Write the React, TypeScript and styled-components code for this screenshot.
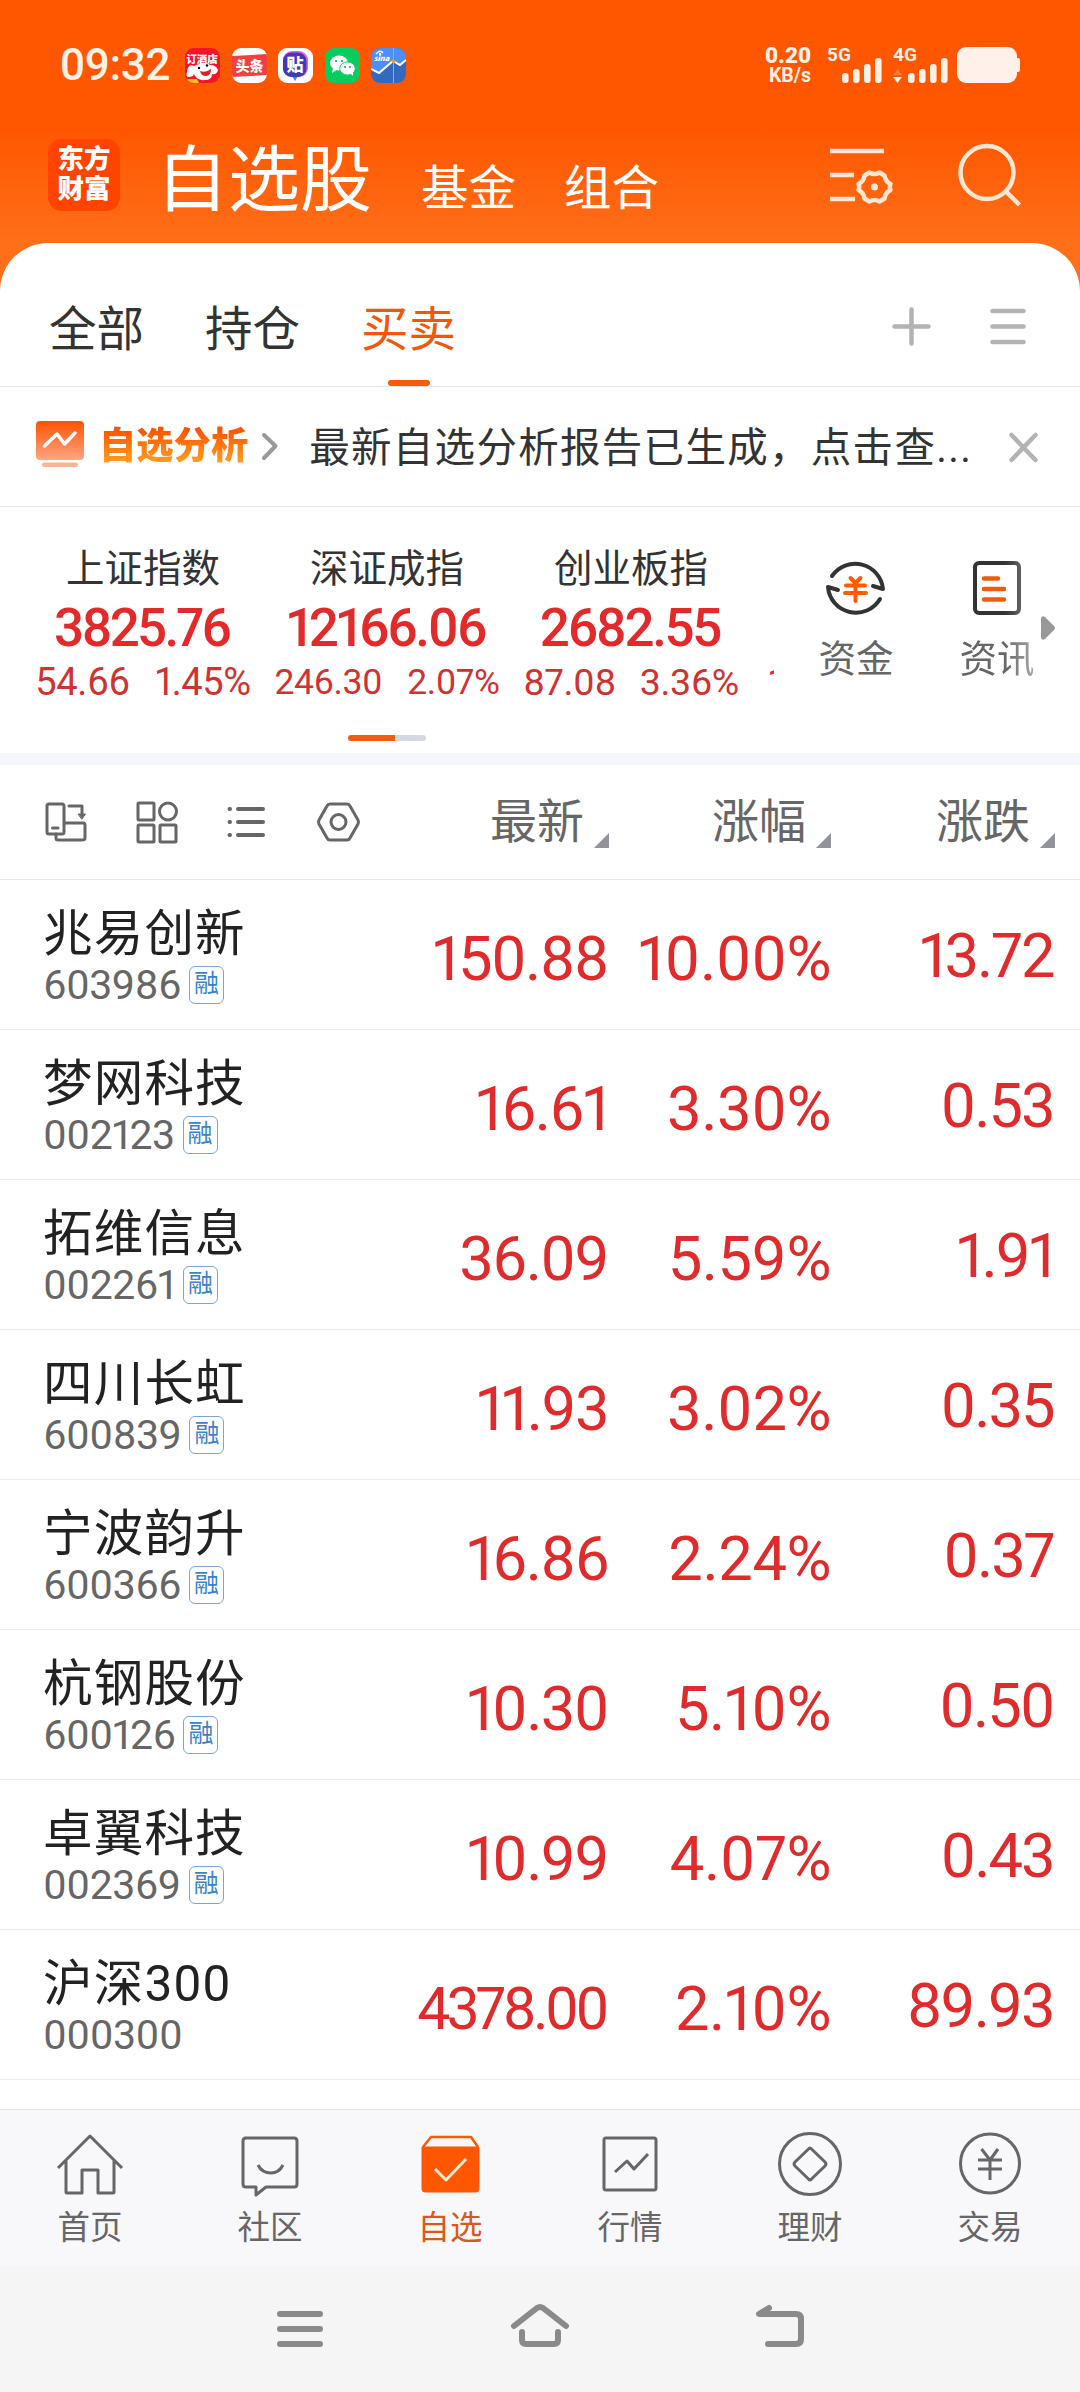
import React from "react";
import styled, { createGlobalStyle } from "styled-components";

const Global = createGlobalStyle`
  * { box-sizing: border-box; }
  body { margin: 0; background: #fff; font-family: Roboto, "Noto Sans CJK SC", sans-serif; }
  svg { display: block; flex: none; overflow: visible; }
`;

const Screen = styled.div`
  width: 1080px; height: 2392px; display: flex; flex-direction: column;
  overflow: hidden; background: #fff; white-space: nowrap;
`;
const Hero = styled.header`
  height: 291px; flex: none; margin-bottom: -48px;
  background: linear-gradient(#ff5600 0, #ff5600 125px, #ff6e18 240px);
`;
const StatusBar = styled.div`
  height: 130px; display: flex; align-items: center; padding: 0 60px 0 60px; color: #fff0e6;
`;
const Clock = styled.div`
  width: 125px; font-size: 44px; font-weight: 500; line-height: 50px; letter-spacing: -0.3px;
`;
const AppIcons = styled.div`display: flex; gap: 11.6px;`;
const AppIcon = styled.div<{ $bg: string }>`
  width: 35px; height: 35px; border-radius: 9px; overflow: hidden; background: ${p => p.$bg};
`;
const StatusRight = styled.div`margin-left: auto; display: flex; align-items: center;`;
const Speed = styled.div`
  text-align: right; font-size: 19.5px; font-weight: 700; line-height: 19px; margin: 0 16px 0 0;
  b { display: block; font-size: 22.5px; line-height: 21px; }
`;

const TitleBar = styled.div`height: 113px; display: flex; padding: 0 60px 0 48px;`;
const Logo = styled.div`
  width: 72px; height: 72px; margin-top: 9px; border-radius: 14px; background: #ff4400; color: #fff;
  display: flex; flex-direction: column; align-items: center; justify-content: center;
  font-size: 26.5px; line-height: 30px; font-weight: 900; padding-bottom: 2px;
`;
const Title = styled.h1`
  margin: 1px -6px 0 36px; font-size: 72px; line-height: 100px; font-weight: 400; color: #fff;
`;
const SubTitle = styled.div<{ $gap: number }>`
  margin: 25px 0 0 ${p => p.$gap}px; font-size: 47.5px; line-height: 68px; color: #fff;
`;
const TitleTools = styled.div`margin-left: auto; display: flex; gap: 65px; padding-top: 14px;`;

const Panel = styled.main`
  flex: 1; min-height: 0; background: #fff; border-radius: 48px 48px 0 0; display: flex; flex-direction: column;
`;
const Tabs = styled.nav`
  height: 144px; flex: none; border-bottom: 1px solid #e4e4e4; display: flex; padding: 0 54px 0 49px; gap: 61px;
`;
const Tab = styled.div<{ $on?: boolean }>`
  height: 143px; display: flex; flex-direction: column; align-items: center; justify-content: space-between;
  font-size: 47.5px; line-height: 68px; padding-top: 53px; color: ${p => (p.$on ? "#f25608" : "#333")};
  &::after {
    content: ""; width: 42px; height: 6px; border-radius: 3px; background: ${p => (p.$on ? "#f85a08" : "transparent")};
  }
`;
const TabTools = styled.div`margin-left: auto; display: flex; gap: 59px; padding-top: 64px;`;

const Notice = styled.section`
  height: 120px; flex: none; border-bottom: 1px solid #e4e4e4; display: flex; align-items: center;
  padding: 0 42px 2px 36px;
`;
const NoticeIcon = styled.div`margin-bottom: 4px;`;
const NoticeTitle = styled.div`
  margin: 0 14px 0 15px; font-size: 37.3px; line-height: 54px; font-weight: 900;
  color: transparent; background: linear-gradient(#ff5500 20%, #ff9c22 80%); background-clip: text;
`;
const NoticeText = styled.div`
  margin: 5px 0 0 31px; font-size: 40.5px; letter-spacing: 1.3px; line-height: 58px; color: #333;
`;
const Push = styled.div`margin-left: auto;`;

const Market = styled.section`height: 246px; flex: none; display: flex; align-items: flex-start; position: relative;`;
const Indices = styled.div`width: 774px; height: 220px; overflow: hidden; display: flex; flex: none;`;
const IndexCell = styled.div<{ $w: number; $pad: number }>`
  width: ${p => p.$w}px; flex: none; padding-top: 34px; padding-left: ${p => p.$pad}px;
  display: flex; flex-direction: column; align-items: center;
`;
const IndexName = styled.div`font-size: 38.5px; line-height: 56px; color: #333;`;
const IndexValue = styled.div<{ $t: number }>`
  font-size: 53px; line-height: 62px; font-weight: 500; color: #e22a2a; font-variant-numeric: proportional-nums;
  letter-spacing: ${p => p.$t}px; margin-right: ${p => -p.$t}px;
`;
const IndexChange = styled.div<{ $s: number; $gap: number }>`
  display: flex; gap: ${p => p.$gap}px; font-size: ${p => p.$s}px; line-height: 47px; color: #d03232;
  font-variant-numeric: proportional-nums; letter-spacing: -0.4px;
`;
const NextChange = styled.div`
  padding: 152px 0 0 9px; font-size: 38px; line-height: 48px; color: #d03232;
`;
const Pager = styled.div`
  position: absolute; left: 348px; top: 228px; width: 78px; height: 6px; border-radius: 3px;
  background: linear-gradient(90deg, #f25c10 47px, #d5d8de 47px);
`;
const Shortcut = styled.div<{ $ml: number; $fade?: boolean }>`
  margin-left: ${p => p.$ml}px; width: 78px; padding-top: 51px; display: flex; flex-direction: column; align-items: center;
  font-size: 37.5px; line-height: 54px; color: #666;
  ${p => p.$fade && "-webkit-mask-image: linear-gradient(90deg, #000 60%, rgba(0,0,0,.55) 100%);"}
  svg { margin-bottom: 14px; }
`;
const More = styled.div`margin: 108px 0 0 4px;`;
const Band = styled.div`height: 12px; flex: none; background: #f6f7fa;`;

const grid = "display: grid; grid-template-columns: 388px 221px 222px 224px;";
const TableHead = styled.div`${grid} height: 115px; flex: none; border-bottom: 1px solid #e8e8e8; align-items: center;`;
const HeadIcons = styled.div`display: flex; padding-left: 44px; align-items: center; gap: 47.6px;`;
const HeadCell = styled.div`
  display: flex; justify-content: flex-end; align-items: flex-end; gap: 10px;
  font-size: 47px; line-height: 68px; color: #666;
  svg { margin-bottom: 8px; }
`;
const Row = styled.div`${grid} height: 150px; flex: none; border-bottom: 1px solid #ebebeb;`;
const NameCell = styled.div`padding: 19px 0 0 43px;`;
const Name = styled.div`font-size: 49.5px; letter-spacing: 1.2px; line-height: 70px; color: #222;`;
const CodeLine = styled.div`display: flex; align-items: center; gap: 8px; height: 40px; margin-top: -4px;`;
const Code = styled.div`
  font-size: 41px; line-height: 40px; color: #666; font-variant-numeric: proportional-nums; letter-spacing: -0.5px;
`;
const Badge = styled.div`
  width: 35px; height: 38px; border: 1.5px solid #77a6d8; border-radius: 6px; color: #3b82c8;
  font-size: 25px; line-height: 34px; text-align: center;
`;
const Value = styled.div<{ $t: number; $up?: boolean; $size?: number }>`
  text-align: right; font-size: ${p => p.$size ?? 61.5}px; line-height: 72px; padding-top: ${p => (p.$up ? 40 : 43)}px;
  color: #df2b2b; font-variant-numeric: proportional-nums; letter-spacing: ${p => p.$t}px; margin-right: ${p => -p.$t - 0.6}px;
`;

const BottomNav = styled.nav`
  height: 157px; flex: none; background: #f8f8fb; border-top: 1px solid #e0e2e0; display: grid; grid-template-columns: repeat(6, 1fr);
`;
const NavItem = styled.div<{ $on?: boolean }>`
  display: flex; flex-direction: column; align-items: center; padding-top: 20px;
  font-size: 32.5px; line-height: 48px; color: ${p => (p.$on ? "#d9581c" : "#666")};
  svg { margin-bottom: 6px; }
`;
const SystemNav = styled.div`
  height: 126px; flex: none; background: #f5f5f5; display: flex; justify-content: center; gap: 180px; padding-top: 33px;
`;

type Stroke = { w: number; h: number; c: string; s: number; children: React.ReactNode; round?: boolean };
const Line = ({ w, h, c, s, children, round }: Stroke) => (
  <svg width={w} height={h} viewBox={`0 0 ${w} ${h}`} fill="none" stroke={c} strokeWidth={s}
    strokeLinecap={round ? "round" : "butt"} strokeLinejoin="round">{children}</svg>
);

const IconText = styled.text`font-family: "Noto Sans CJK SC", sans-serif; font-weight: 900; text-anchor: middle;`;

const Signal = ({ label, arrows }: { label: string; arrows?: boolean }) => (
  <svg width="56" height="36" viewBox="0 0 56 36" fill="#fff0e6">
    <text x="0" y="14" fontSize="19" fontWeight="700" fontFamily="Roboto, sans-serif">{label}</text>
    {arrows && <path d="M0 28 L4.5 22 L9 28Z" opacity=".25" />}
    {arrows && <path d="M0 30 H9 L4.5 36Z" />}
    <rect x="15" y="26" width="6.6" height="10" rx="3" />
    <rect x="26" y="22" width="6.6" height="14" rx="3" />
    <rect x="37" y="17" width="6.6" height="19" rx="3" />
    <rect x="48" y="11" width="6.6" height="25" rx="3" />
  </svg>
);

const indices = [
  { name: "上证指数", value: "3825.76", t: -2.8, a: "54.66", b: "1.45%", s: 38, gap: 26, w: 254, pad: 32 },
  { name: "深证成指", value: "12166.06", t: -2.3, a: "246.30", b: "2.07%", s: 35.5, gap: 25, w: 250, pad: 16 },
  { name: "创业板指", value: "2682.55", t: -2.4, a: "87.08", b: "3.36%", s: 37.5, gap: 24, w: 254, pad: 0 },
];

type Stock = {
  name: string; code: string; price: string; pct: string; diff: string; margin: boolean; track?: number; size?: number;
};
const stocks: Stock[] = [
  { name: "兆易创新", code: "603986", price: "150.88", pct: "10.00%", diff: "13.72", margin: true },
  { name: "梦网科技", code: "002123", price: "16.61", pct: "3.30%", diff: "0.53", margin: true },
  { name: "拓维信息", code: "002261", price: "36.09", pct: "5.59%", diff: "1.91", margin: true },
  { name: "四川长虹", code: "600839", price: "11.93", pct: "3.02%", diff: "0.35", margin: true },
  { name: "宁波韵升", code: "600366", price: "16.86", pct: "2.24%", diff: "0.37", margin: true },
  { name: "杭钢股份", code: "600126", price: "10.30", pct: "5.10%", diff: "0.50", margin: true },
  { name: "卓翼科技", code: "002369", price: "10.99", pct: "4.07%", diff: "0.43", margin: true },
  { name: "沪深300", code: "000300", price: "4378.00", pct: "2.10%", diff: "89.93", margin: false, track: -3.8, size: 59 },
];

const G = "#666";
const Triangle = () => <svg width="15" height="15"><path d="M15 0V15H0Z" fill="#92929a" /></svg>;

export default function App() {
  return (
    <Screen>
      <Global />
      <Hero>
        <StatusBar>
          <Clock>09:32</Clock>
          <AppIcons>
            <AppIcon $bg="#f5152b">
              <svg width="35" height="35" viewBox="0 0 35 35">
                <IconText x="17" y="15" fontSize="10.5" fill="#fff">订酒店</IconText>
                <path d="M9 18Q3 15 2 24Q0 29 4 29Q8 29 9 26Q12 33 20 32Q27 32 27 26Q32 27 33 22Q31 17 25 17Q20 13 14 16Z" fill="#fff" />
                <path d="M15 23Q21 25 26 21Q26 28 21 28Q16 28 15 23Z" fill="#d8232f" />
                <circle cx="14" cy="20" r="1.2" /><circle cx="22" cy="17.5" r="1.2" />
                <path d="M2 31H12L14 35H4Z" fill="#ffc222" />
              </svg>
            </AppIcon>
            <AppIcon $bg="#fff">
              <svg width="35" height="35" viewBox="0 0 35 35">
                <path d="M0 8L35 6V27L0 29Z" fill="#f04142" />
                <IconText x="17.5" y="23" fontSize="14" fill="#fff">头条</IconText>
              </svg>
            </AppIcon>
            <AppIcon $bg="#fff">
              <svg width="35" height="35" viewBox="0 0 35 35">
                <path d="M14 28L17 33L20 28Z" fill="#2e8cf0" />
                <rect x="5" y="3" width="25" height="26" rx="9" fill="#d86ae0" />
                <rect x="5" y="4.5" width="23.5" height="24.5" rx="8.5" fill="#4338b8" />
                <IconText x="17" y="23" fontSize="17" fill="#fff">贴</IconText>
              </svg>
            </AppIcon>
            <AppIcon $bg="#08cc60">
              <svg width="35" height="35" viewBox="0 0 35 35" fill="#fff">
                <ellipse cx="14" cy="15" rx="9" ry="7.6" /><path d="M8 20L7 25L13 21Z" />
                <ellipse cx="22.5" cy="20.5" rx="7.8" ry="6.6" stroke="#08cc60" /><path d="M25 25L28 28V23Z" />
                <g fill="#08a850"><circle cx="11" cy="13" r="1.1" /><circle cx="17" cy="13" r="1.1" /><circle cx="20" cy="19" r="1" /><circle cx="25" cy="19" r="1" /></g>
              </svg>
            </AppIcon>
            <AppIcon $bg="#3569c0">
              <svg width="35" height="35" viewBox="0 0 35 35" fill="none">
                <path d="M0 0H35V12L29 17L22 13L8 25L0 21Z" fill="#4c8ff8" />
                <path d="M22.5 0V35" stroke="#a9aaa0" strokeWidth="1" />
                <path d="M0 21L8 25L22 13L29 17L35 12" stroke="#fff" strokeWidth="2" />
                <path d="M5 6Q9 1 12 5" stroke="#fff" strokeWidth="1.4" />
                <circle cx="9" cy="6" r="1.2" fill="#fff" />
                <IconText x="10.5" y="13" fontSize="7.5" fontStyle="italic" fill="#fff">sina</IconText>
                <circle cx="22.5" cy="13.5" r="1.8" fill="#f39a2b" />
              </svg>
            </AppIcon>
          </AppIcons>
          <StatusRight>
            <Speed><b>0.20</b>KB/s</Speed>
            <Signal label="5G" />
            <svg width="10" height="1" />
            <Signal label="4G" arrows />
            <svg width="8" height="1" />
            <svg width="63" height="36" fill="#fff0ea"><rect width="60" height="36" rx="9" /><rect x="57" y="11" width="6" height="14" rx="2" /></svg>
          </StatusRight>
        </StatusBar>
        <TitleBar>
          <Logo><span>东方</span><span>财富</span></Logo>
          <Title>自选股</Title>
          <SubTitle $gap={55}>基金</SubTitle>
          <SubTitle $gap={48}>组合</SubTitle>
          <TitleTools>
            <Line w={64} h={60} c="#ffe6d2" s={4.5}>
              <path d="M1 7H55M1 31H25M1 55H26" />
              <path d="M40.500 28.500Q45.500 31.500 50.500 28.500L55.500 31.500Q56 37 61.500 40Q60 43 61.500 46Q56 49 55.500 54.500L50.500 57.500Q45.500 54.500 40.500 57.500L35.500 54.500Q35 49 29.500 46Q31 43 29.500 40Q35 37 35.500 31.500Z" />
              <circle cx="45.500" cy="43" r="3.5" fill="#ffe6d2" stroke="none" />
            </Line>
            <Line w={62} h={62} c="#ffe6d2" s={4.5}><circle cx="29" cy="28.5" r="26.5" /><path d="M48 47.500L61.500 61" /></Line>
          </TitleTools>
        </TitleBar>
      </Hero>
      <Panel>
        <Tabs>
          <Tab>全部</Tab><Tab>持仓</Tab><Tab $on>买卖</Tab>
          <TabTools>
            <Line w={39} h={39} c="#b3b3b3" s={4.5} round><path d="M19.500 2.500V36.500M2.500 19.500H36.500" /></Line>
            <Line w={36} h={39} c="#b3b3b3" s={4.5} round><path d="M2.500 4H33.500M2.500 19.500H33.500M2.500 35H33.500" /></Line>
          </TabTools>
        </Tabs>
        <Notice>
          <NoticeIcon>
            <svg width="48" height="46" viewBox="0 0 48 46" fill="none">
              <defs><linearGradient id="an" x2="0" y2="1"><stop stopColor="#ff5200" /><stop offset="1" stopColor="#ffa684" /></linearGradient></defs>
              <rect width="48" height="39" rx="4" fill="url(#an)" /><rect x="6" y="41.5" width="36" height="4.5" rx="2" fill="#fbb396" />
              <path d="M8.500 25L21 13L28.500 23L39 12" stroke="#fff" strokeWidth="3.5" strokeLinecap="round" strokeLinejoin="round" />
            </svg>
          </NoticeIcon>
          <NoticeTitle>自选分析</NoticeTitle>
          <Line w={16} h={28} c="#999" s={4} round><path d="M2 3L13.500 14L2 26" /></Line>
          <NoticeText>最新自选分析报告已生成，点击查...</NoticeText>
          <Push><Line w={29} h={28} c="#b3b3b3" s={4.5} round><path d="M2.500 3L26.500 28M26.500 3L2.500 28" /></Line></Push>
        </Notice>
        <Market>
          <Indices>
            {indices.map(i => (
              <IndexCell key={i.name} $w={i.w} $pad={i.pad}>
                <IndexName>{i.name}</IndexName>
                <IndexValue $t={i.t}>{i.value}</IndexValue>
                <IndexChange $s={i.s} $gap={i.gap}><span>{i.a}</span><span>{i.b}</span></IndexChange>
              </IndexCell>
            ))}
            <NextChange>1</NextChange>
          </Indices>
          <Shortcut $ml={43}>
            <Line w={60} h={60} c="#333" s={4} round>
              <path d="M6 18A28 28 0 0 1 57 31L47 28M54 41A28 28 0 0 1 2 29L12 32" />
              <path d="M24.500 20L29.500 25L34.500 20M20 27.500H39M19 35H40M29.500 25V43" stroke="#ff5a00" />
            </Line>资金
          </Shortcut>
          <Shortcut $ml={63} $fade>
            <Line w={48} h={60} c="#333" s={4} round>
              <rect x="2" y="5" width="44" height="50" rx="4" />
              <path d="M11 20.500H25M11 31H31M11 41.500H31" stroke="#ee5c14" strokeWidth="4.5" />
            </Line>资讯
          </Shortcut>
          <More><svg width="16" height="26"><path d="M1 3Q2 0 5 2L14 11Q16 13 14 15L5 24Q2 26 1 23Z" fill="#999" /></svg></More>
          <Pager />
        </Market>
        <Band />
        <TableHead>
          <HeadIcons>
            <Line w={44} h={42} c={G} s={3} round>
              <rect x="3" y="3" width="17" height="30" rx="2" /><path d="M8.500 27H14M12 33V37Q12 39 14 39H38Q41 39 41 37V24Q41 22 39 22H21M25 5H38V13" />
              <path d="M34.500 13H41.500L38 18Z" fill={G} strokeWidth="1" />
            </Line>
            <Line w={42} h={42} c={G} s={3}>
              <rect x="2" y="2" width="16" height="17" rx="1" /><circle cx="32" cy="10.5" r="8.5" /><rect x="2" y="24" width="16" height="17" rx="1" /><rect x="24" y="24" width="16" height="17" rx="1" />
            </Line>
            <Line w={44} h={42} c={G} s={4} round><path d="M13 8H38M13 21H38M13 34H38M4.500 8H5M4.500 21H5M4.500 34H5" /></Line>
            <Line w={44} h={42} c={G} s={3}><path d="M13 3H30Q32 3 33 5L41 19Q42 21 41 23L33 37Q32 39 30 39H13Q11 39 10 37L2 23Q1 21 2 19L10 5Q11 3 13 3Z" /><circle cx="21.5" cy="21" r="7.5" /></Line>
          </HeadIcons>
          <HeadCell>最新<Triangle /></HeadCell>
          <HeadCell>涨幅<Triangle /></HeadCell>
          <HeadCell>涨跌<Triangle /></HeadCell>
        </TableHead>
        {stocks.map(s => (
          <Row key={s.code}>
            <NameCell>
              <Name>{s.name}</Name>
              <CodeLine><Code>{s.code}</Code>{s.margin && <Badge>融</Badge>}</CodeLine>
            </NameCell>
            <Value $t={s.track ?? -1.6} $size={s.size}>{s.price}</Value>
            <Value $t={-0.4}>{s.pct}</Value>
            <Value $t={-2} $up>{s.diff}</Value>
          </Row>
        ))}
      </Panel>
      <BottomNav>
        <NavItem><Line w={66} h={68} c={G} s={3}><path d="M1 38L33 6L65 38M9 31V62Q9 63 10 63H25V40H41V63H56Q57 63 57 62V31" /></Line>首页</NavItem>
        <NavItem><Line w={60} h={68} c={G} s={3}><path d="M5 8H54Q57 8 57 11V54Q57 57 54 57H26L16 65V57H6Q3 57 3 54V11Q3 8 6 8Z" /><path d="M18 35Q22 43 31 43Q39 43 43 35" /></Line>社区</NavItem>
        <NavItem $on><Line w={60} h={68} c="#ff5600" s={2.5}><path d="M3 17L11 7H51L58 17" /><path d="M2 17H59V59Q59 62 56 62H5Q2 62 2 59Z" fill="#ff5600" strokeWidth="1" /><path d="M15 39L26 50L46 29" stroke="#ffe8d4" strokeWidth="3" /></Line>自选</NavItem>
        <NavItem><Line w={56} h={68} c={G} s={3}><rect x="2" y="8" width="52" height="52" rx="2" /><path d="M13 42L25 31L32 39L46 24" /></Line>行情</NavItem>
        <NavItem><Line w={64} h={68} c={G} s={3}><circle cx="32" cy="34" r="30.5" /><path d="M30.500 19Q32 17 33.500 19L47 32Q49 34 47 36L33.500 49Q32 51 30.500 49L17 36Q15 34 17 32Z" /></Line>理财</NavItem>
        <NavItem><Line w={62} h={68} c={G} s={3}><circle cx="31" cy="33.5" r="29.5" /><path d="M22.500 19L31 30L39 19M19 30H43M19 39H43M31 30V50" /></Line>交易</NavItem>
      </BottomNav>
      <SystemNav>
        <Line w={60} h={60} c="#8a8a8a" s={6} round><path d="M10 15H50M10 30H50M10 45H50" /></Line>
        <Line w={60} h={60} c="#8a8a8a" s={6} round><path d="M4 27L27 9Q30 7 33 9L56 27M12 33V41Q12 45 16 45H44Q48 45 48 41V33" /></Line>
        <Line w={60} h={60} c="#8a8a8a" s={6} round><path d="M19 9L9 15H46Q51 15 51 20V40Q51 45 46 45H18" /></Line>
      </SystemNav>
    </Screen>
  );
}
